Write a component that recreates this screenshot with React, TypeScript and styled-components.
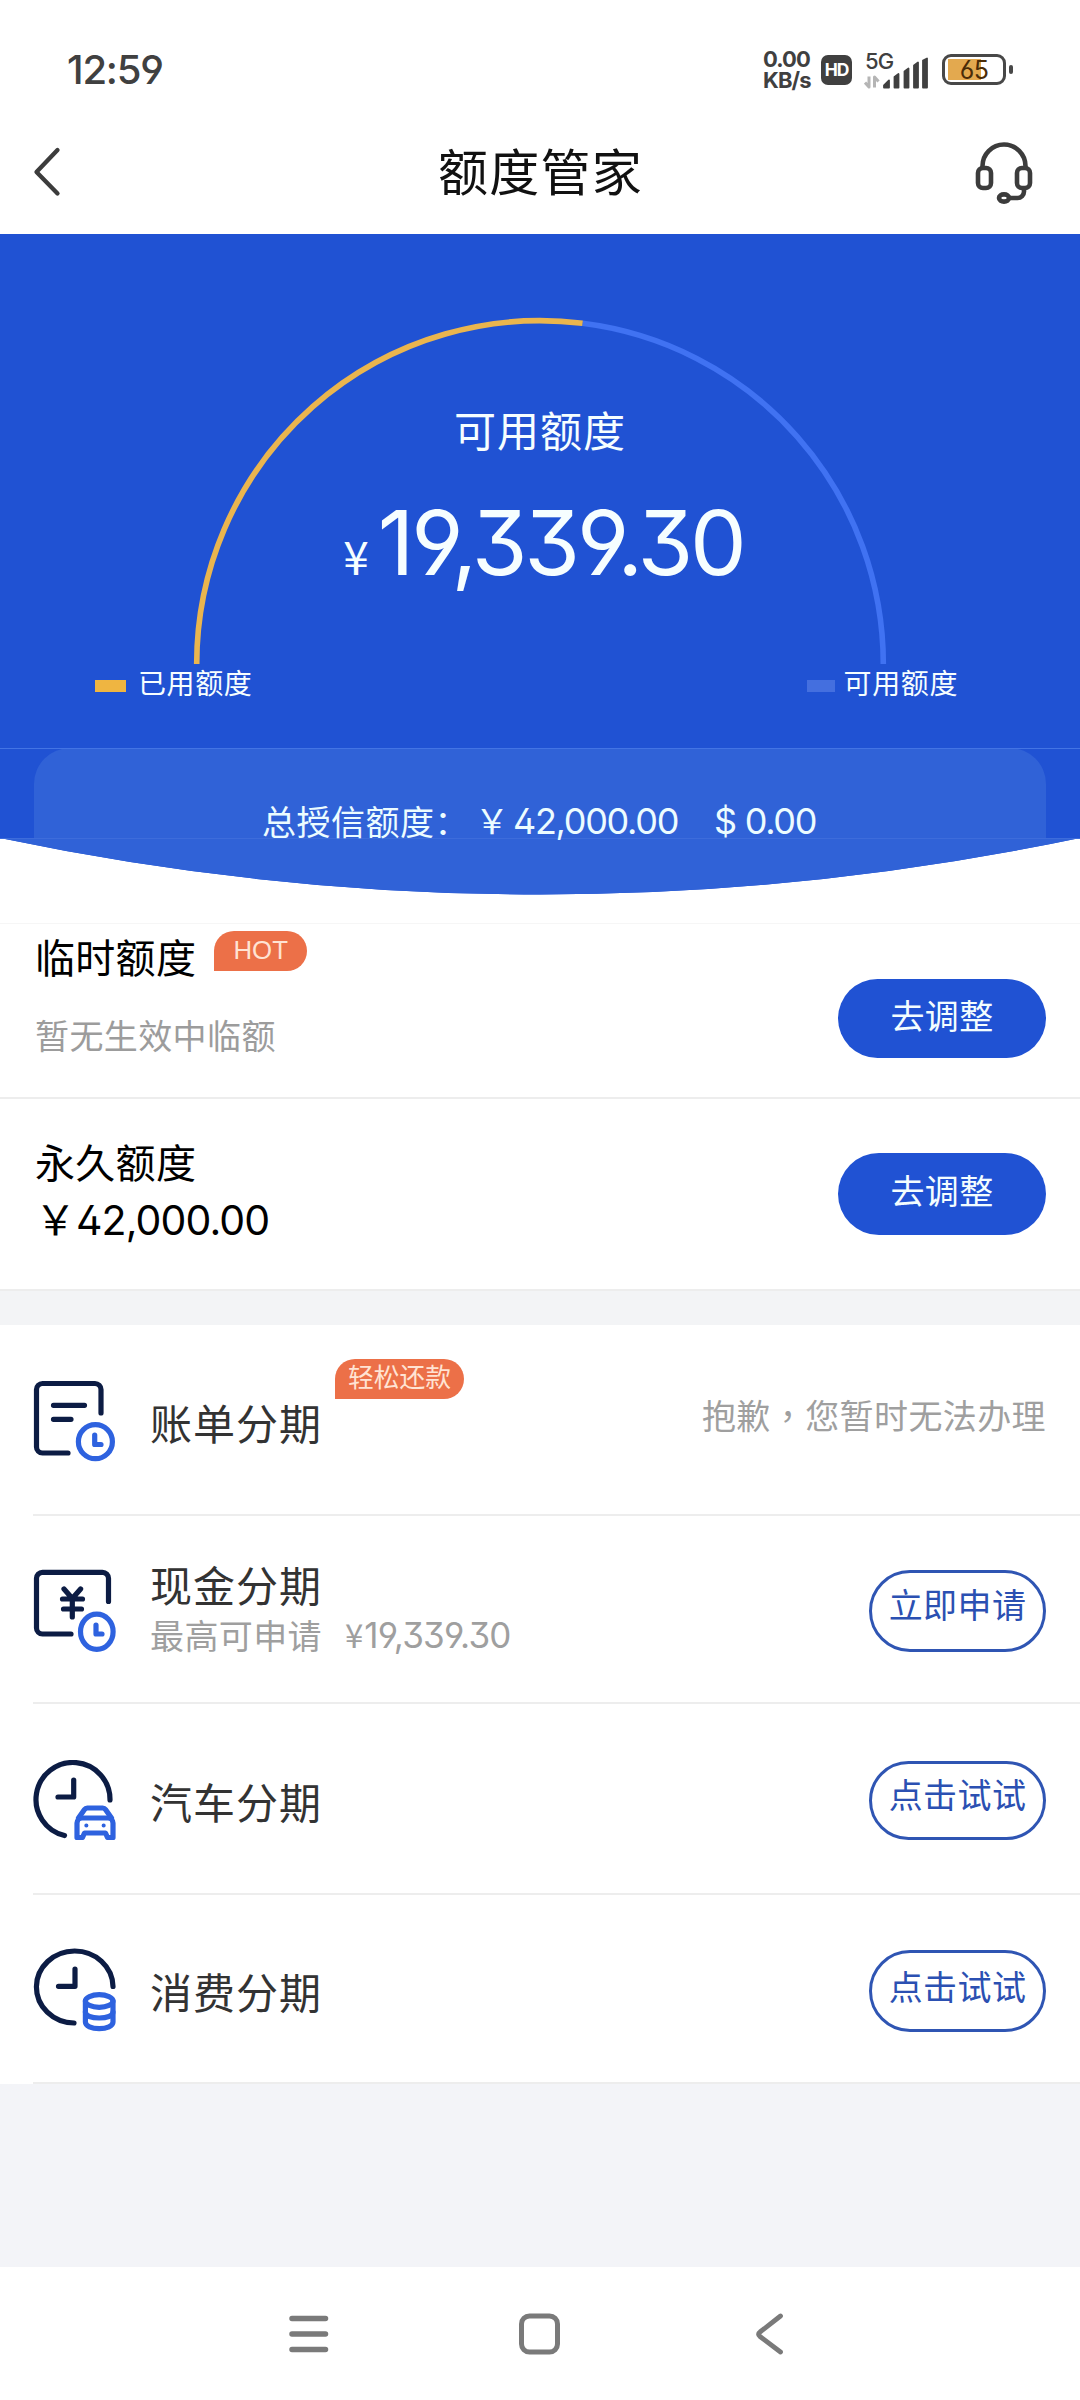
import React from "react";
import styled, { createGlobalStyle, css } from "styled-components";

const cjk = `"Noto Sans CJK SC", sans-serif`;
const latin = `Inter, "Noto Sans CJK SC", sans-serif`;
const blue = "#2052d3";

/* full-width punctuation */
const WIDE_YEN = "\uffe5";
const WIDE_COLON = "\uff1a";
const WIDE_COMMA = "\uff0c";

const Global = createGlobalStyle`
  * { box-sizing: border-box; }
  body { margin: 0; background: #fff; }
`;

const Screen = styled.div`
  width: 1080px;
  height: 2400px;
  display: flex;
  flex-direction: column;
  background: #fff;
  font-family: ${cjk};
  color: #000;
  white-space: nowrap;
  overflow: hidden;
  svg { display: block; flex: none; }
`;

const digits = css`
  font-family: ${latin};
  font-feature-settings: "ss01" 1, "cv01" 0, "cv09" 1;
`;

/* status bar */
const StatusBar = styled.div`
  height: 110px;
  padding: 29px 67px 0 67px;
  display: flex;
  align-items: center;
  justify-content: space-between;
  color: #404040;
  ${digits}
`;
const Clock = styled.div`
  font-size: 40px;
  font-weight: 500;
  letter-spacing: -1.2px;
`;
const StatusIcons = styled.div`
  display: flex;
  align-items: center;
`;
const NetSpeed = styled.div`
  width: 58px;
  font-size: 22px;
  line-height: 20.5px;
  font-weight: 700;
  letter-spacing: -0.9px;
`;
const HdBadge = styled.div`
  width: 31px;
  height: 30px;
  border-radius: 7px;
  background: #404040;
  color: #fff;
  display: flex;
  align-items: center;
  justify-content: center;
  font-size: 17.5px;
  font-weight: 700;
  letter-spacing: -1px;
`;
const Signal = styled.div`
  width: 64px;
  height: 36px;
  margin: 0 14px 0 12px;
`;
const SignalLabel = styled.div`
  font-size: 22px;
  line-height: 18px;
  height: 18px;
  font-weight: 500;
  margin-bottom: -17px;
  padding-left: 1px;
  letter-spacing: -0.8px;
`;
const Battery = styled.div`
  width: 64px;
  height: 31px;
  border: 3px solid #484848;
  border-radius: 9px;
  display: flex;
  align-items: center;
  justify-content: center;
  font-size: 25px;
  color: #4a2c08;
  background: linear-gradient(#e3a94f, #e3a94f) 3px 2px / 33px 21px no-repeat;
  letter-spacing: -0.7px;
`;
const BatteryNub = styled.div`
  width: 4px;
  height: 9px;
  margin-left: 3px;
  border-radius: 2px;
  background: #484848;
`;

/* title bar */
const TitleBar = styled.header`
  height: 124px;
  padding: 0 47px 0 33px;
  display: flex;
  justify-content: space-between;
`;
const BackSlot = styled.div`
  width: 73px;
  padding-top: 36px;
`;
const Title = styled.h1`
  margin: 0;
  font-size: 50px;
  line-height: 118px;
  font-weight: 400;
  letter-spacing: 1.2px;
  color: #111;
`;
const HelpSlot = styled.div`
  padding-top: 32px;
`;

/* hero */
const Hero = styled.section`
  height: 514px;
  background: ${blue};
  color: #f6feff;
  display: flex;
  flex-direction: column;
  position: relative;
`;
const Gauge = styled.svg`
  position: absolute;
  left: 190px;
  top: 80px;
`;
const HeroLabel = styled.div`
  padding-top: 164px;
  text-align: center;
  font-size: 42px;
  line-height: 62px;
  letter-spacing: 1px;
`;
const HeroAmount = styled.div`
  display: flex;
  justify-content: center;
  align-items: baseline;
  margin-top: 25px;
  padding-left: 7px;
  height: 129px;
  line-height: 116px;
  font-size: 90px;
  letter-spacing: -3.2px;
  ${digits}
`;
const HeroCurrency = styled.span`
  font-family: ${cjk};
  font-size: 46px;
  letter-spacing: 0;
  margin-right: 9px;
`;
const Legends = styled.div`
  margin-top: 48px;
  padding: 0 122px 0 95px;
  display: flex;
  justify-content: space-between;
`;
const Legend = styled.div<{ $color: string; $w: number; $gap: number }>`
  display: flex;
  align-items: center;
  font-size: 28px;
  line-height: 40px;
  letter-spacing: 0.6px;
  &::before {
    content: "";
    width: ${(p) => p.$w}px;
    height: 12px;
    margin: 8px ${(p) => p.$gap}px 0 0;
    background: ${(p) => p.$color};
  }
`;
const TotalBand = styled.div`
  height: 147px;
  position: relative;
`;
const BandShape = styled.svg`
  position: absolute;
  left: 0;
  top: 0;
`;
const TotalRow = styled.div`
  position: relative;
  display: flex;
  padding: 47px 0 0 262px;
  font-size: 34px;
  line-height: 52px;
  letter-spacing: 0.5px;
  color: #ecfcff;
`;
const TotalValue = styled.span<{ $left: number }>`
  ${digits}
  font-size: 36px;
  letter-spacing: -1.3px;
  margin-left: ${(p) => p.$left}px;
`;

/* limits */
const LimitCard = styled.section<{ $h: number }>`
  height: ${(p) => p.$h}px;
  border-bottom: 2px solid #ededed;
  padding: 0 34px 0 35px;
  display: flex;
  justify-content: space-between;
`;
const Spacer = styled.div`
  height: 29px;
  border-bottom: 1px solid #f6f6f6;
`;
const LimitInfo = styled.div<{ $top: number }>`
  padding-top: ${(p) => p.$top}px;
`;
const LimitHead = styled.div`
  display: flex;
  align-items: flex-start;
`;
const LimitName = styled.div`
  font-size: 40px;
  line-height: 56px;
  letter-spacing: 0.3px;
`;
const LimitNote = styled.div`
  margin-top: 26px;
  font-size: 34px;
  line-height: 50px;
  letter-spacing: 0.4px;
  color: #9c9c9c;
`;
const LimitAmount = styled.div`
  ${digits}
  margin-top: 3px;
  font-size: 41px;
  line-height: 56px;
  letter-spacing: -0.9px;
`;
const Yen = styled.span<{ $size: number; $right: number }>`
  font-family: ${cjk};
  font-size: ${(p) => p.$size}px;
  line-height: 1;
  letter-spacing: 0;
  margin-right: ${(p) => p.$right}px;
`;
const Tag = styled.span<{ $w: number; $left: number; $top: number }>`
  width: ${(p) => p.$w}px;
  height: 40px;
  margin: ${(p) => p.$top}px 0 0 ${(p) => p.$left}px;
  border-radius: 20px 20px 20px 0;
  background: #ec7048;
  color: #ffe3d3;
  font-family: "Liberation Sans", "Noto Sans CJK SC", sans-serif;
  font-size: 25.8px;
  line-height: 38px;
  text-align: center;
`;
const AdjustButton = styled.button<{ $h: number; $top: number; $lift: number }>`
  width: 208px;
  height: ${(p) => p.$h}px;
  margin-top: ${(p) => p.$top}px;
  border: 0;
  border-radius: 41px;
  padding: 0 0 ${(p) => p.$lift}px;
  background: ${blue};
  color: #f3fdff;
  font: 400 34px/50px ${cjk};
  letter-spacing: 0.4px;
`;

/* instalments */
const Divider = styled.div`
  height: 34px;
  background: #f3f4f6;
`;
const Row = styled.div<{ $h: number }>`
  height: ${(p) => p.$h}px;
  margin-left: 33px;
  padding-right: 34px;
  border-bottom: 2px solid #ededed;
  display: flex;
  align-items: center;
`;
const IconSlot = styled.div<{ $down: number }>`
  margin-top: ${(p) => p.$down * 2}px;
`;
const RowText = styled.div<{ $shift: number }>`
  margin-left: 33px;
  padding-top: ${(p) => p.$shift}px;
  flex: 1;
`;
const RowHead = styled.div`
  display: flex;
  align-items: flex-start;
`;
const RowName = styled.div`
  font-size: 42px;
  line-height: 52px;
  letter-spacing: 1px;
  color: #333;
`;
const RowSub = styled.div`
  display: flex;
  font-size: 34px;
  line-height: 50px;
  letter-spacing: 0.4px;
  color: #9f9f9f;
`;
const SubAmount = styled.span`
  ${digits}
  font-size: 35px;
  letter-spacing: -0.8px;
  margin-left: 23px;
`;
const Unavailable = styled.div`
  font-size: 34px;
  line-height: 50px;
  margin-bottom: 9px;
  letter-spacing: 0.4px;
  color: #9f9f9f;
`;
const MidComma = styled.span`
  font-family: "Noto Sans CJK TC", sans-serif;
`;
const OutlineButton = styled.button<{ $h: number; $lift: number }>`
  width: 177px;
  height: ${(p) => p.$h}px;
  margin-top: 4px;
  border: 3px solid #2f55b3;
  border-radius: 41px;
  padding: 0 0 ${(p) => p.$lift}px;
  background: #fff;
  color: #2b50b2;
  font: 400 34px/50px ${cjk};
  letter-spacing: 0.4px;
`;
const Filler = styled.div`
  flex: 1;
  background: #f3f4f8;
`;
const NavBar = styled.nav`
  height: 133px;
  padding-left: 288px;
  display: flex;
  align-items: center;
  gap: 190px;
  background: #fff;
`;

const navy = "#0c1c44";
const accent = "#2e62df";
const line = { fill: "none", strokeWidth: 5.2, strokeLinecap: "round", strokeLinejoin: "round" } as const;

const BillIcon = () => (
  <svg width="84" height="84" {...line}>
    <g stroke={navy}>
      <path d="M68 33V9.500a6 6 0 0 0-6-6H9.500a6 6 0 0 0-6 6V67a6 6 0 0 0 6 6H35" />
      <path d="M20.500 25.300H51.500M20.500 39.300H38" />
    </g>
    <g stroke={accent}>
      <circle cx="62.400" cy="61.700" r="17" />
      <path d="M61.700 55V64.500H68" />
    </g>
  </svg>
);
const CashIcon = () => (
  <svg width="84" height="84" {...line}>
    <g stroke={navy}>
      <path d="M75.500 33.500V10.300a6 6 0 0 0-6-6H9.500a6 6 0 0 0-6 6V60a6 6 0 0 0 6 6H38" />
      <path d="M31 21l8.300 9.500L47.600 21M29.500 31H49.500M30.500 41H48.500M39.300 31V49" />
    </g>
    <g stroke={accent}>
      <ellipse cx="63.800" cy="63.700" rx="16.300" ry="17.600" />
      <path d="M63 57V66H69" />
    </g>
  </svg>
);
const CarIcon = () => (
  <svg width="84" height="84" {...line}>
    <g stroke={navy}>
      <path d="M77 40A37 37 0 1 0 31.500 75.500" />
      <path d="M40.700 20V37H25" />
    </g>
    <g stroke={accent}>
      <path d="M45.500 58l6-8.500a3.500 3.500 0 0 1 2.800-1.500h15.400a3.500 3.500 0 0 1 2.800 1.500l6 8.500" />
      <path d="M44 63a5 5 0 0 1 5-5H75a5 5 0 0 1 5 5V77.500H74.500L72.500 73H51.500L49.500 77.500H44Z" />
      <path strokeWidth="4" d="M53.300 65.500h.1M70.600 65.500h.1" />
    </g>
  </svg>
);
const CoinsIcon = () => (
  <svg width="84" height="84" {...line}>
    <g stroke={navy}>
      <path d="M80 38.500A38.300 36 0 1 0 41 75" />
      <path d="M42 21V38.300H25.500" />
    </g>
    <g stroke={accent}>
      <ellipse cx="66.200" cy="53" rx="13.800" ry="6.300" />
      <path d="M52.400 53V74c0 4 6.200 6.600 13.800 6.600s13.800-2.600 13.800-6.600V53" />
      <path d="M52.400 64c0 4 6.200 6 13.800 6s13.800-2 13.800-6" />
    </g>
  </svg>
);

const TOTAL = 42000;
const AVAILABLE = 19339.3;
const R = 343.3;
const theta = Math.PI * ((TOTAL - AVAILABLE) / TOTAL);
const splitX = 350 - R * Math.cos(theta);
const splitY = 350 - R * Math.sin(theta);

export default function App() {
  return (
    <Screen>
      <Global />
      <StatusBar>
        <Clock>12:59</Clock>
        <StatusIcons>
          <NetSpeed>
            <div>0.00</div>
            <div>KB/s</div>
          </NetSpeed>
          <HdBadge>HD</HdBadge>
          <Signal>
            <SignalLabel>5G</SignalLabel>
            <svg width="64" height="36">
              <path d="M5 23.500v10.500L1 29.500M10.500 34.500V24l4 4.500" fill="none" stroke="#b5b5b5" strokeWidth="3" strokeLinejoin="round" />
              <path d="M20 32.500l5-5v7h-5zM30.500 24l4-3V34.500h-4zM40.500 18.500l4-3V34.500h-4zM50 12.500L54 9.500v25h-4zM59 7.500L63 5.500v29h-4z" fill="#404040" stroke="#404040" strokeWidth="1.800" strokeLinejoin="round" />
            </svg>
          </Signal>
          <Battery>65</Battery>
          <BatteryNub />
        </StatusIcons>
      </StatusBar>
      <TitleBar>
        <BackSlot>
          <svg width="28" height="52" fill="none" stroke="#3c3c3c" strokeWidth="4.300" strokeLinecap="round" strokeLinejoin="round">
            <path d="M24.500 4L3.500 26 24.500 47.500" />
          </svg>
        </BackSlot>
        <Title>额度管家</Title>
        <HelpSlot>
          <svg width="58" height="62" fill="none" stroke="#3c3c3c" strokeWidth="4.600">
            <path d="M7.500 26v-2a21.500 21.500 0 0 1 43 0v2" />
            <rect x="3" y="26" width="13" height="20" rx="5" />
            <rect x="42" y="26" width="13" height="20" rx="5" />
            <path d="M49 46v3.500a6.500 6.500 0 0 1-6.500 6.500H35" />
            <ellipse cx="29" cy="56" rx="5" ry="3.600" />
          </svg>
        </HelpSlot>
      </TitleBar>

      <Hero>
        <Gauge width="700" height="350" fill="none" strokeWidth="5.600">
          <path d={`M${splitX} ${splitY}A${R} ${R} 0 0 1 ${350 + R} 350`} stroke="#4072f2" />
          <path d={`M${350 - R} 350A${R} ${R} 0 0 1 ${splitX} ${splitY}`} stroke="#eab54e" />
        </Gauge>
        <HeroLabel>可用额度</HeroLabel>
        <HeroAmount><HeroCurrency>¥</HeroCurrency>19,339.30</HeroAmount>
        <Legends>
          <Legend $color="#efb541" $w={31} $gap={12}>已用额度</Legend>
          <Legend $color="#446fdf" $w={28} $gap={9}>可用额度</Legend>
        </Legends>
      </Hero>
      <TotalBand>
        <BandShape width="1080" height="147">
          <path d="M0 0H1080V90Q540 203 0 90Z" fill={blue} />
          <path d="M34 90V36A36 36 0 0 1 70 0H1010A36 36 0 0 1 1046 36V90H1080Q540 203 0 90Z" fill="#3062d7" />
          <path d="M0 .500H1080" stroke="#4374e4" />
          <path d="M0 90.500H1080" stroke="#3d6cdb" />
        </BandShape>
        <TotalRow>
          总授信额度{WIDE_COLON}
          <TotalValue $left={6}><Yen $size={34} $right={4}>{WIDE_YEN}</Yen>42,000.00</TotalValue>
          <TotalValue $left={36}>$ 0.00</TotalValue>
        </TotalRow>
      </TotalBand>

      <Spacer />
      <LimitCard $h={175}>
        <LimitInfo $top={4}>
          <LimitHead>
            <LimitName>临时额度</LimitName>
            <Tag $w={93} $left={18} $top={3}>HOT</Tag>
          </LimitHead>
          <LimitNote>暂无生效中临额</LimitNote>
        </LimitInfo>
        <AdjustButton $h={79} $top={55} $lift={7}>去调整</AdjustButton>
      </LimitCard>
      <LimitCard $h={192}>
        <LimitInfo $top={34}>
          <LimitName>永久额度</LimitName>
          <LimitAmount><Yen $size={41} $right={0}>{WIDE_YEN}</Yen>42,000.00</LimitAmount>
        </LimitInfo>
        <AdjustButton $h={82} $top={54} $lift={9}>去调整</AdjustButton>
      </LimitCard>

      <Divider />
      <Row $h={191}>
        <IconSlot $down={2.5}><BillIcon /></IconSlot>
        <RowText $shift={5}>
          <RowHead>
            <RowName>账单分期</RowName>
            <Tag $w={129} $left={13} $top={-37}>轻松还款</Tag>
          </RowHead>
        </RowText>
        <Unavailable>抱歉<MidComma>{WIDE_COMMA}</MidComma>您暂时无法办理</Unavailable>
      </Row>
      <Row $h={188}>
        <IconSlot $down={1}><CashIcon /></IconSlot>
        <RowText $shift={-2}>
          <RowName>现金分期</RowName>
          <RowSub>最高可申请<SubAmount><Yen $size={33} $right={1}>¥</Yen>19,339.30</SubAmount></RowSub>
        </RowText>
        <OutlineButton $h={82} $lift={14}>立即申请</OutlineButton>
      </Row>
      <Row $h={191}>
        <IconSlot $down={3.5}><CarIcon /></IconSlot>
        <RowText $shift={4}><RowName>汽车分期</RowName></RowText>
        <OutlineButton $h={79} $lift={13}>点击试试</OutlineButton>
      </Row>
      <Row $h={189}>
        <IconSlot $down={1.5}><CoinsIcon /></IconSlot>
        <RowText $shift={4}><RowName>消费分期</RowName></RowText>
        <OutlineButton $h={82} $lift={10}>点击试试</OutlineButton>
      </Row>
      <Filler />
      <NavBar>
        <svg width="41" height="42" fill="none" stroke="#7a7a7a" strokeWidth="5.500" strokeLinecap="round">
          <path d="M4 5.500H37.500M4 21H37.500M4 36.500H37.500" />
        </svg>
        <svg width="42" height="42" fill="none" stroke="#7a7a7a" strokeWidth="5">
          <rect x="2.500" y="3" width="36" height="36" rx="8" />
        </svg>
        <svg width="36" height="42" fill="none" stroke="#7a7a7a" strokeWidth="4.800" strokeLinecap="round">
          <path d="M29.500 3L9 19q-3 2.200 0 4.500L29.500 39" />
        </svg>
      </NavBar>
    </Screen>
  );
}
